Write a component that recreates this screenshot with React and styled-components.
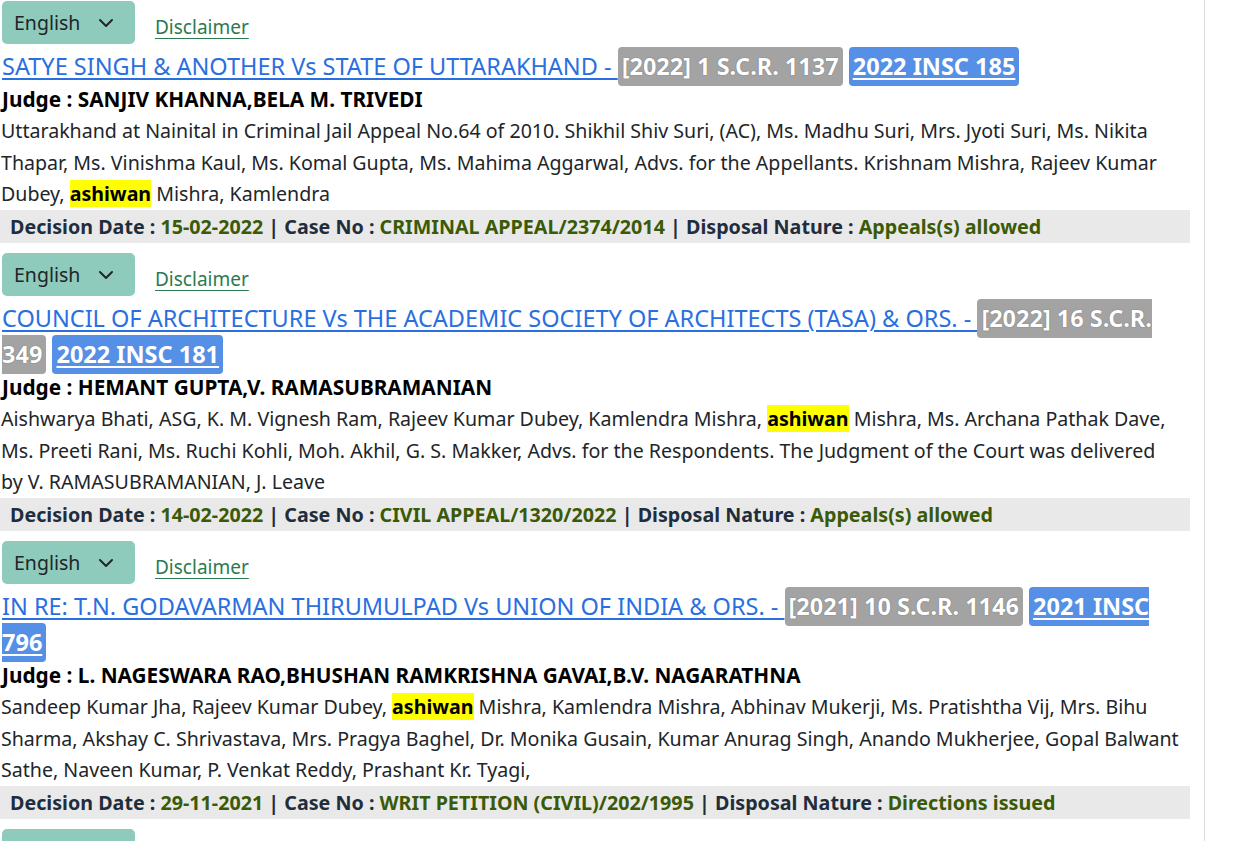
import React from "react";
import styled, { createGlobalStyle } from "styled-components";

const GlobalStyle = createGlobalStyle`
  html, body { margin: 0; padding: 0; background: #ffffff; }
  body {
    font-family: "Noto Sans", "Open Sans", Arial, sans-serif;
    color: #212529;
    overflow: hidden;
  }
`;

const Page = styled.div`
  display: flex;
  height: 841px;
  overflow: hidden;
`;

const Column = styled.div`
  width: 1190px;
  padding-right: 14px;
  border-right: 1px solid #dedede;
  flex: none;
`;

const Result = styled.div`
  margin-bottom: 9.5px;
`;

const TopRow = styled.div`
  display: flex;
  align-items: flex-end;
  gap: 20px;
  padding-left: 2px;
  padding-top: 1px;
`;

const LangSelect = styled.div`
  width: 133px;
  height: 43px;
  box-sizing: border-box;
  background: #8ecbbd;
  border-radius: 5px;
  display: flex;
  align-items: center;
  justify-content: space-between;
  padding: 0 21px 0 12px;
  font-size: 19.5px;
  color: #212529;
`;

const DisclaimerLink = styled.a`
  color: #2b7a50;
  font-size: 19px;
  line-height: 28px;
  text-decoration: underline;
  text-underline-offset: 4px;
  margin-bottom: 3px;
`;

const Title = styled.div`
  margin: 4px 0 0 0;
  padding-left: 2px;
  font-size: 23.5px;
  line-height: 36px;
`;

const CaseLink = styled.a`
  color: #2a6fdf;
  text-decoration: underline;
  text-underline-offset: 3px;
`;

const Badge = styled.span`
  background: ${(p) => (p.$tone === "blue" ? "#5590e6" : "#a3a3a3")};
  color: #ffffff;
  font-weight: 700;
  border-radius: 4px;
  padding: 3px 4px 4px;
  text-decoration: ${(p) => (p.$tone === "blue" ? "underline" : "none")};
  text-decoration-thickness: 2px;
  text-underline-offset: 3px;
  text-shadow: ${(p) => (p.$tone === "blue" ? "none" : "0 0 1px rgba(0,0,0,0.5)")};
`;

const JudgeLine = styled.div`
  font-size: 20.8px;
  line-height: 31px;
  font-weight: 700;
  color: #000000;
  padding-left: 2px;
`;

const Body = styled.p`
  margin: 0;
  font-size: 19.6px;
  line-height: 31.5px;
  color: #212529;
  padding: 0 8px 0 1px;
`;

const Mark = styled.mark`
  background: #ffff00;
  color: #000000;
  font-weight: 700;
`;

const InfoBar = styled.div`
  background: #e9e9e9;
  height: 33px;
  display: flex;
  align-items: center;
  padding-left: 10px;
  font-size: 19.7px;
  font-weight: 700;
  color: #1f2d3d;
  white-space: nowrap;
`;

const Value = styled.span`
  color: #3a5a08;
`;

const Chevron = () => (
  <svg width="16" height="10" viewBox="0 0 16 10" fill="none">
    <path d="M2 2 L8 8 L14 2" stroke="#212529" strokeWidth="2" strokeLinecap="round" strokeLinejoin="round" />
  </svg>
);

const results = [
  {
    title: "SATYE SINGH & ANOTHER Vs STATE OF UTTARAKHAND - ",
    scr: "[2022] 1 S.C.R. 1137",
    insc: "2022 INSC 185",
    judge: "SANJIV KHANNA,BELA M. TRIVEDI",
    before:
      "Uttarakhand at Nainital in Criminal Jail Appeal No.64 of 2010. Shikhil Shiv Suri, (AC), Ms. Madhu Suri, Mrs. Jyoti Suri, Ms. Nikita Thapar, Ms. Vinishma Kaul, Ms. Komal Gupta, Ms. Mahima Aggarwal, Advs. for the Appellants. Krishnam Mishra, Rajeev Kumar Dubey, ",
    after: " Mishra, Kamlendra",
    date: "15-02-2022",
    caseNo: "CRIMINAL APPEAL/2374/2014",
    nature: "Appeals(s) allowed",
  },
  {
    title: "COUNCIL OF ARCHITECTURE Vs THE ACADEMIC SOCIETY OF ARCHITECTS (TASA) & ORS. - ",
    scr: "[2022] 16 S.C.R. 349",
    insc: "2022 INSC 181",
    judge: "HEMANT GUPTA,V. RAMASUBRAMANIAN",
    before:
      "Aishwarya Bhati, ASG, K. M. Vignesh Ram, Rajeev Kumar Dubey, Kamlendra Mishra, ",
    after:
      " Mishra, Ms. Archana Pathak Dave, Ms. Preeti Rani, Ms. Ruchi Kohli, Moh. Akhil, G. S. Makker, Advs. for the Respondents. The Judgment of the Court was delivered by V. RAMASUBRAMANIAN, J. Leave",
    date: "14-02-2022",
    caseNo: "CIVIL APPEAL/1320/2022",
    nature: "Appeals(s) allowed",
  },
  {
    title: "IN RE: T.N. GODAVARMAN THIRUMULPAD Vs UNION OF INDIA & ORS. - ",
    scr: "[2021] 10 S.C.R. 1146",
    insc: "2021 INSC 796",
    judge: "L. NAGESWARA RAO,BHUSHAN RAMKRISHNA GAVAI,B.V. NAGARATHNA",
    before: "Sandeep Kumar Jha, Rajeev Kumar Dubey, ",
    after:
      " Mishra, Kamlendra Mishra, Abhinav Mukerji, Ms. Pratishtha Vij, Mrs. Bihu Sharma, Akshay C. Shrivastava, Mrs. Pragya Baghel, Dr. Monika Gusain, Kumar Anurag Singh, Anando Mukherjee, Gopal Balwant Sathe, Naveen Kumar, P. Venkat Reddy, Prashant Kr. Tyagi,",
    date: "29-11-2021",
    caseNo: "WRIT PETITION (CIVIL)/202/1995",
    nature: "Directions issued",
  },
  {
    title: "UNION OF INDIA Vs STATE OF MAHARASHTRA & ORS. - ",
    scr: "[2021] 8 S.C.R. 412",
    insc: "2021 INSC 512",
    judge: "D.Y. CHANDRACHUD,M.R. SHAH",
    before: "Rajeev Kumar Dubey, ",
    after: " Mishra, Kamlendra Mishra, Advs. for the Appellant.",
    date: "10-09-2021",
    caseNo: "CIVIL APPEAL/1010/2021",
    nature: "Disposed off",
  },
];

function ResultItem({ r }) {
  return (
    <Result>
      <TopRow>
        <LangSelect>
          <span>English</span>
          <Chevron />
        </LangSelect>
        <DisclaimerLink href="#">Disclaimer</DisclaimerLink>
      </TopRow>
      <Title>
        <CaseLink href="#">{r.title}</CaseLink> <Badge>{r.scr}</Badge>{" "}
        <Badge $tone="blue">{r.insc}</Badge>
      </Title>
      <JudgeLine>Judge : {r.judge}</JudgeLine>
      <Body>
        {r.before}
        <Mark>ashiwan</Mark>
        {r.after}
      </Body>
      <InfoBar>
        Decision Date :&nbsp;<Value>{r.date}</Value>&nbsp;| Case No :&nbsp;
        <Value>{r.caseNo}</Value>&nbsp;| Disposal Nature :&nbsp;<Value>{r.nature}</Value>
      </InfoBar>
    </Result>
  );
}

export default function App() {
  return (
    <>
      <GlobalStyle />
      <Page>
        <Column>
          {results.map((r, i) => (
            <ResultItem key={i} r={r} />
          ))}
        </Column>
      </Page>
    </>
  );
}
